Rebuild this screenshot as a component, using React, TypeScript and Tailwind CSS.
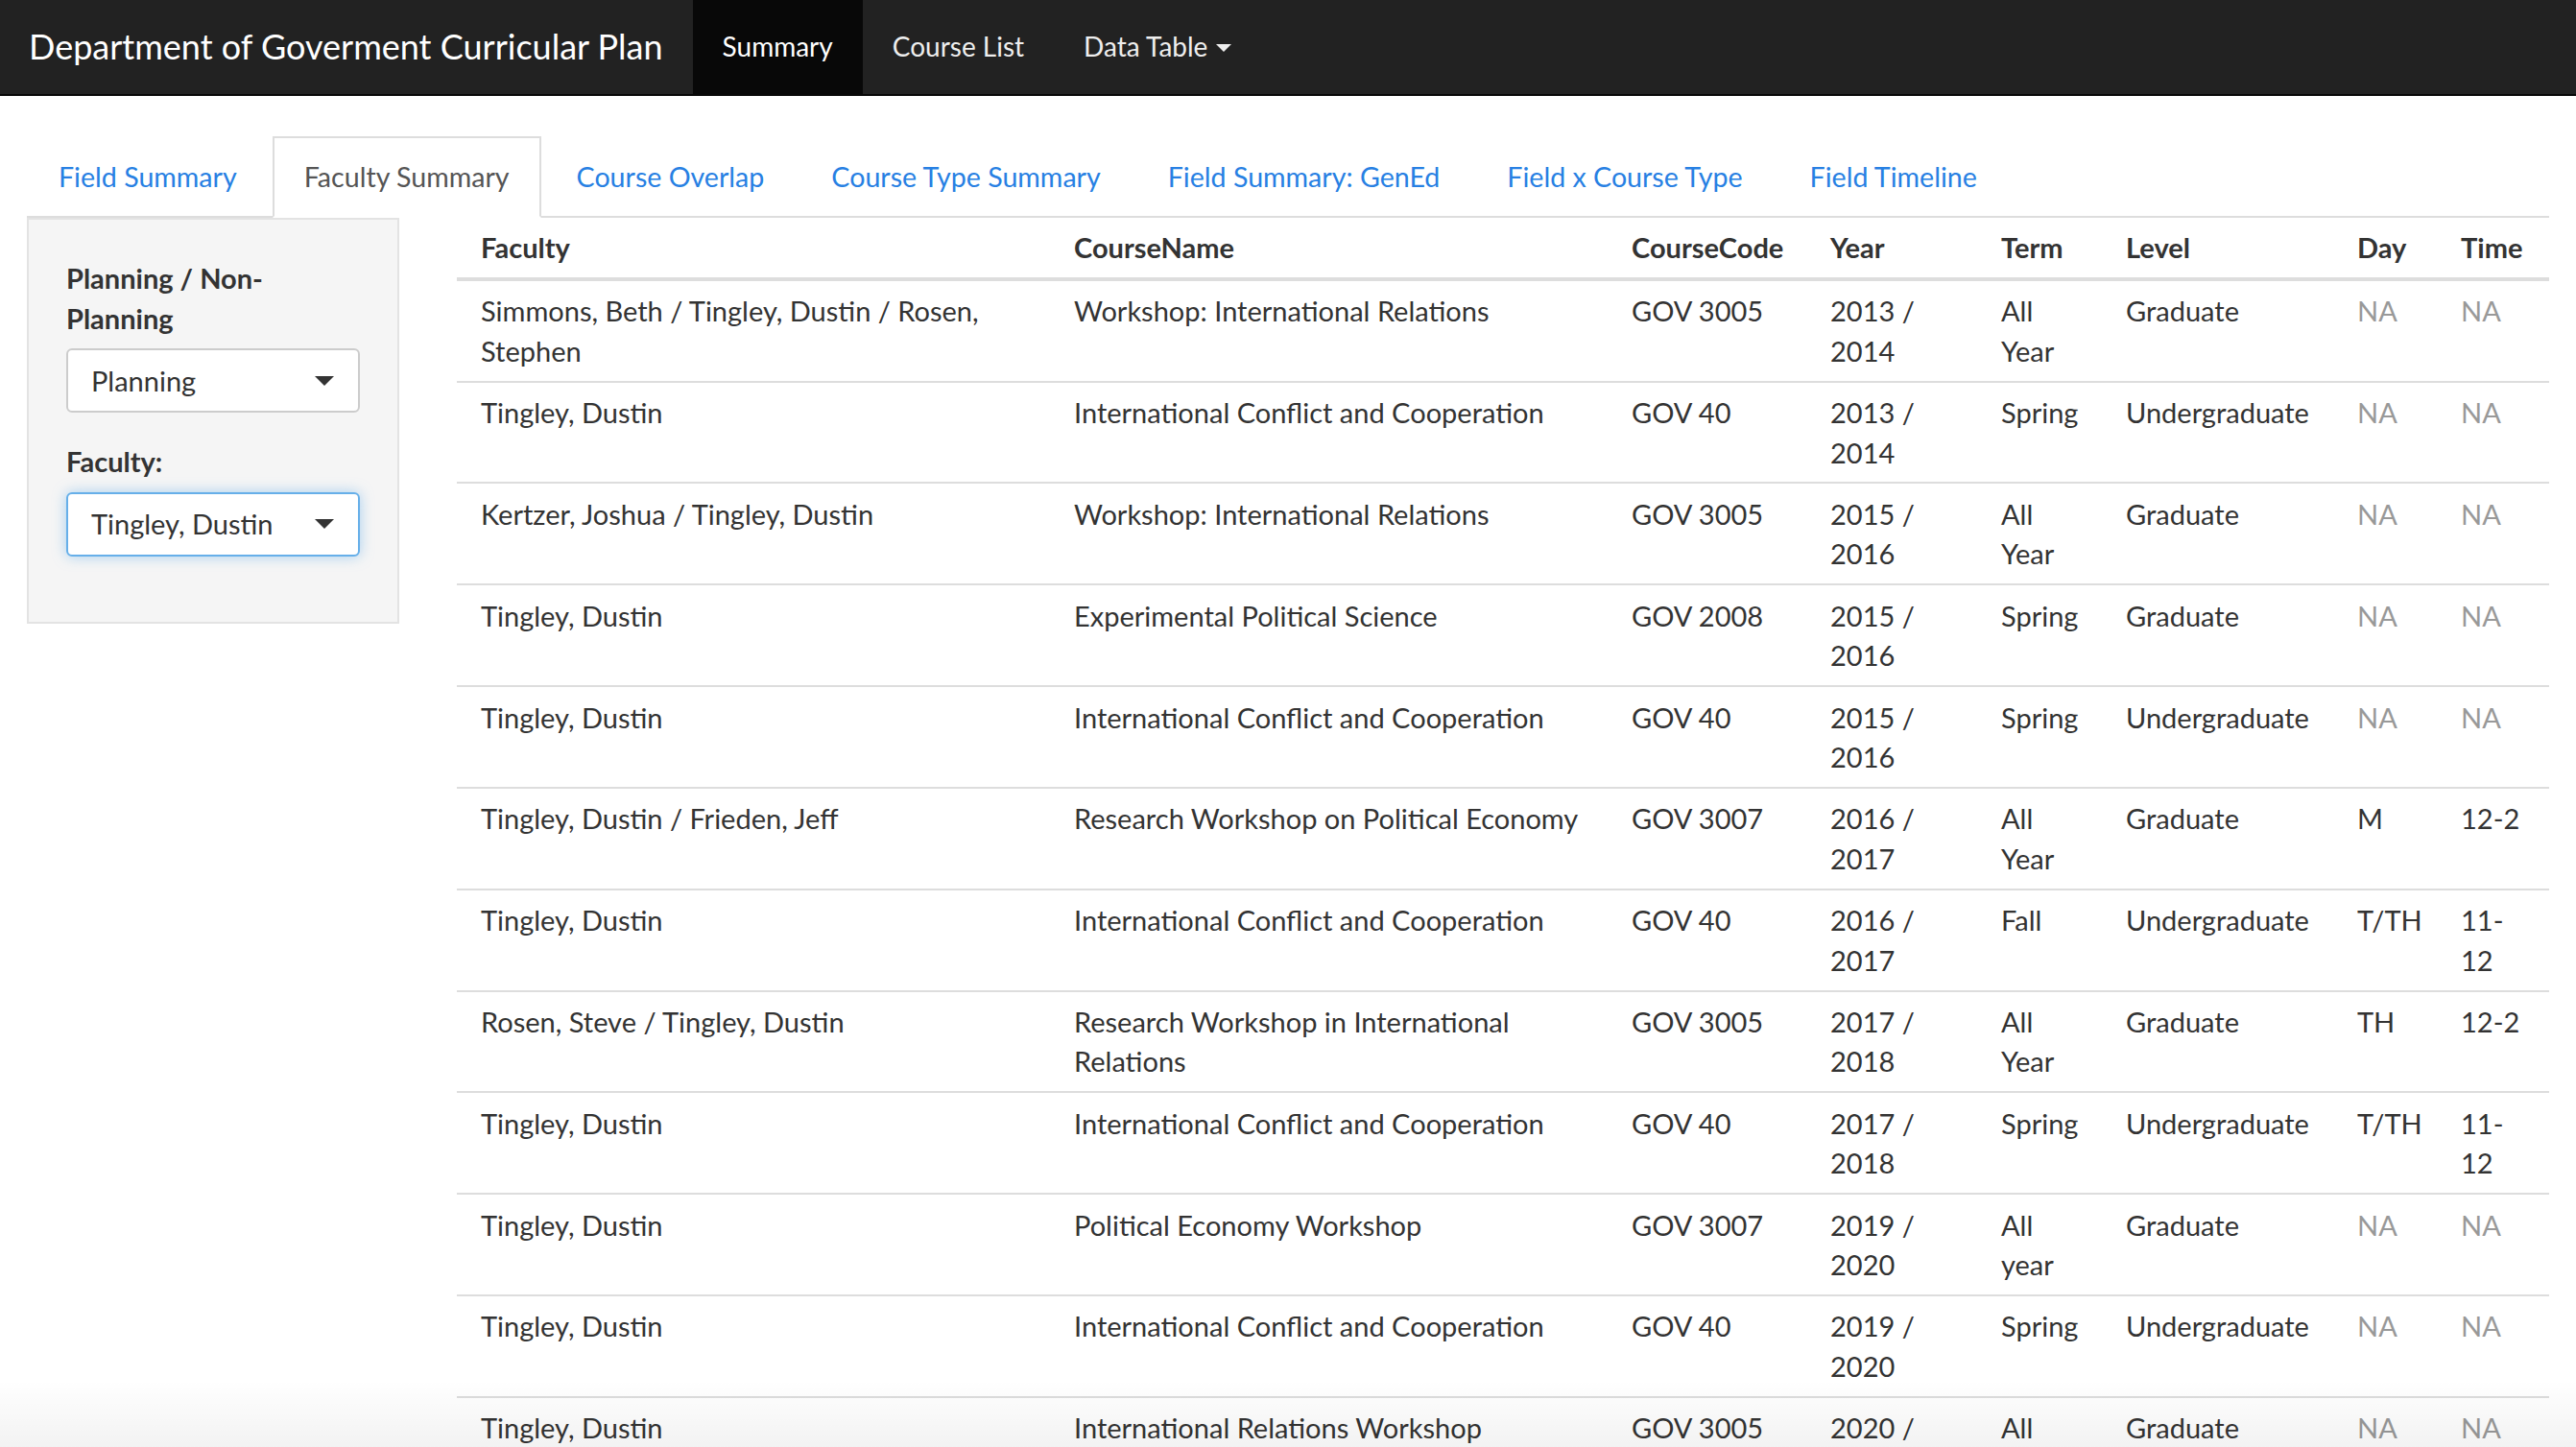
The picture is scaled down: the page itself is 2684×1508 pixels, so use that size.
type Cell = string | string[];

type Row = {
  faculty: Cell;
  course: Cell;
  code: string;
  year: Cell;
  term: Cell;
  level: string;
  day: string;
  time: Cell;
};

const rows: Row[] = [
  { faculty: ["Simmons, Beth / Tingley, Dustin / Rosen,", "Stephen"], course: "Workshop: International Relations", code: "GOV 3005", year: ["2013 /", "2014"], term: ["All", "Year"], level: "Graduate", day: "NA", time: "NA" },
  { faculty: "Tingley, Dustin", course: "International Conflict and Cooperation", code: "GOV 40", year: ["2013 /", "2014"], term: "Spring", level: "Undergraduate", day: "NA", time: "NA" },
  { faculty: "Kertzer, Joshua / Tingley, Dustin", course: "Workshop: International Relations", code: "GOV 3005", year: ["2015 /", "2016"], term: ["All", "Year"], level: "Graduate", day: "NA", time: "NA" },
  { faculty: "Tingley, Dustin", course: "Experimental Political Science", code: "GOV 2008", year: ["2015 /", "2016"], term: "Spring", level: "Graduate", day: "NA", time: "NA" },
  { faculty: "Tingley, Dustin", course: "International Conflict and Cooperation", code: "GOV 40", year: ["2015 /", "2016"], term: "Spring", level: "Undergraduate", day: "NA", time: "NA" },
  { faculty: "Tingley, Dustin / Frieden, Jeff", course: "Research Workshop on Political Economy", code: "GOV 3007", year: ["2016 /", "2017"], term: ["All", "Year"], level: "Graduate", day: "M", time: "12-2" },
  { faculty: "Tingley, Dustin", course: "International Conflict and Cooperation", code: "GOV 40", year: ["2016 /", "2017"], term: "Fall", level: "Undergraduate", day: "T/TH", time: ["11-", "12"] },
  { faculty: "Rosen, Steve / Tingley, Dustin", course: ["Research Workshop in International", "Relations"], code: "GOV 3005", year: ["2017 /", "2018"], term: ["All", "Year"], level: "Graduate", day: "TH", time: "12-2" },
  { faculty: "Tingley, Dustin", course: "International Conflict and Cooperation", code: "GOV 40", year: ["2017 /", "2018"], term: "Spring", level: "Undergraduate", day: "T/TH", time: ["11-", "12"] },
  { faculty: "Tingley, Dustin", course: "Political Economy Workshop", code: "GOV 3007", year: ["2019 /", "2020"], term: ["All", "year"], level: "Graduate", day: "NA", time: "NA" },
  { faculty: "Tingley, Dustin", course: "International Conflict and Cooperation", code: "GOV 40", year: ["2019 /", "2020"], term: "Spring", level: "Undergraduate", day: "NA", time: "NA" },
  { faculty: "Tingley, Dustin", course: "International Relations Workshop", code: "GOV 3005", year: ["2020 /", "2021"], term: ["All", "Year"], level: "Graduate", day: "NA", time: "NA" },
];

const headers = ["Faculty", "CourseName", "CourseCode", "Year", "Term", "Level", "Day", "Time"];
const widths = [618, 581, 207, 178, 130, 241, 108, 117];

const Lines = ({ value }: { value: Cell }) => {
  const lines = Array.isArray(value) ? value : [value];
  return (
    <>
      {lines.map((l, i) => (
        <span key={i} className="block whitespace-nowrap">
          {l}
        </span>
      ))}
    </>
  );
};

const Caret = () => (
  <span className="ml-auto mr-[25px] h-0 w-0 border-x-[10px] border-t-[10px] border-x-transparent border-t-[#333]" />
);

const TabLink = ({ label, active }: { label: string; active?: boolean }) => (
  <div
    className={
      active
        ? "-mb-[2px] mr-[4px] border-2 border-[#ddd] border-b-white bg-white px-[31px] py-[20px] text-[#555]"
        : "-mb-[2px] mr-[4px] border-2 border-transparent px-[31px] py-[20px] text-[#2780e3]"
    }
  >
    {label}
  </div>
);

export default function App() {
  return (
    <div className="relative h-screen overflow-hidden bg-white font-[Lato,sans-serif] text-[29px] leading-[41.4px] text-[#333]">
      {/* navbar */}
      <nav className="flex h-[100px] border-b-2 border-[#080808] bg-[#222]">
        <div className="flex items-center pl-[30px] pr-[31px] text-[36px] text-white">
          Department of Goverment Curricular Plan
        </div>
        <div className="flex items-center bg-[#080808] px-[31px] text-[28px] text-white">Summary</div>
        <div className="flex items-center px-[31px] text-[28px] text-[#eee]">Course List</div>
        <div className="flex items-center px-[31px] text-[28px] text-[#eee]">
          Data Table
          <span className="ml-[9px] mt-[2px] h-0 w-0 border-x-[8px] border-t-[8px] border-x-transparent border-t-[#eee]" />
        </div>
      </nav>

      {/* tabs */}
      <div className="mx-[28px] mt-[42px] flex border-b-2 border-[#ddd] text-[28.6px]">
        <TabLink label="Field Summary" />
        <TabLink label="Faculty Summary" active />
        <TabLink label="Course Overlap" />
        <TabLink label="Course Type Summary" />
        <TabLink label="Field Summary: GenEd" />
        <TabLink label="Field x Course Type" />
        <TabLink label="Field Timeline" />
      </div>

      <div className="flex gap-[60px] px-[28px]">
        {/* sidebar */}
        <div className="w-[388px] shrink-0 self-start border-2 border-[#e3e3e3] bg-[#f5f5f5] px-[39px] pb-[38px] pt-[40px]">
          <div className="mb-[30px]">
            <div className="mb-[11px] font-bold">
              Planning / Non-
              <br />
              Planning
            </div>
            <div className="flex h-[67px] items-center rounded-[6px] border-2 border-[#ccc] bg-white pl-[24px]">
              Planning
              <Caret />
            </div>
          </div>
          <div className="mb-[30px]">
            <div className="mb-[11px] font-bold">Faculty:</div>
            <div className="flex h-[67px] items-center rounded-[6px] border-2 border-[#66afe9] bg-white pl-[24px] shadow-[0_0_14px_rgba(102,175,233,0.55)]">
              Tingley, Dustin
              <Caret />
            </div>
          </div>
        </div>

        {/* table */}
        <table className="w-[2180px] table-fixed border-collapse">
          <colgroup>
            {widths.map((w, i) => (
              <col key={i} style={{ width: w }} />
            ))}
          </colgroup>
          <thead>
            <tr>
              {headers.map((h) => (
                <th key={h} className="border-b-4 border-[#ddd] px-[25px] py-[10px] text-left font-bold">
                  {h}
                </th>
              ))}
            </tr>
          </thead>
          <tbody>
            {rows.map((r, i) => (
              <tr key={i} className="align-top">
                <td className="border-t-2 border-[#ddd] px-[25px] py-[10.5px]"><Lines value={r.faculty} /></td>
                <td className="border-t-2 border-[#ddd] px-[25px] py-[10.5px]"><Lines value={r.course} /></td>
                <td className="border-t-2 border-[#ddd] px-[25px] py-[10.5px]"><Lines value={r.code} /></td>
                <td className="border-t-2 border-[#ddd] px-[25px] py-[10.5px]"><Lines value={r.year} /></td>
                <td className="border-t-2 border-[#ddd] px-[25px] py-[10.5px]"><Lines value={r.term} /></td>
                <td className="border-t-2 border-[#ddd] px-[25px] py-[10.5px]"><Lines value={r.level} /></td>
                <td className={r.day === "NA" ? "border-t-2 border-[#ddd] px-[25px] py-[10.5px] text-[#999]" : "border-t-2 border-[#ddd] px-[25px] py-[10.5px]"}>
                  <Lines value={r.day} />
                </td>
                <td className={r.time === "NA" ? "border-t-2 border-[#ddd] px-[25px] py-[10.5px] text-[#999]" : "border-t-2 border-[#ddd] px-[25px] py-[10.5px]"}>
                  <Lines value={r.time} />
                </td>
              </tr>
            ))}
          </tbody>
        </table>
      </div>

      {/* soft fade at the bottom edge */}
      <div className="pointer-events-none absolute inset-x-0 bottom-0 h-[70px] bg-linear-to-t from-black/[0.05] to-transparent" />
    </div>
  );
}
